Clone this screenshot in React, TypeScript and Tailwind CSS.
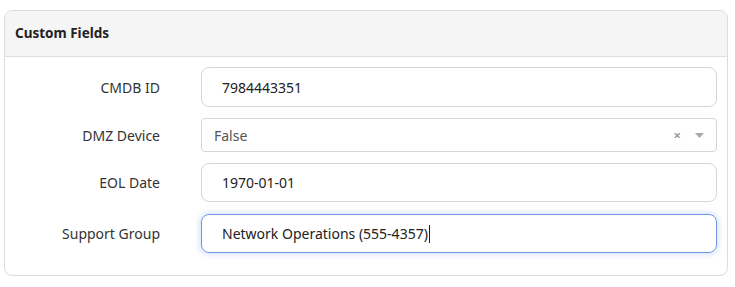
import React from 'react';

const font = { fontFamily: '"Noto Sans", "Open Sans", sans-serif' };

function Row({ label, children }: { label: string; children: React.ReactNode }) {
  return (
    <div className="flex items-center">
      <label className="w-[155px] shrink-0 text-right text-[14px] text-[#333]">{label}</label>
      <div className="ml-[41px] mr-[10px] flex-1">{children}</div>
    </div>
  );
}

export default function App() {
  return (
    <div className="h-[287px] w-[735px] bg-white pl-[4px] pr-[7px] pt-[10px]" style={font}>
      <div className="overflow-hidden rounded-[8px] border border-[#dcdcdc] bg-white">
        <div className="flex h-[46px] items-center border-b border-[#dedede] bg-[#f5f5f5] px-[10px]">
          <h3 className="text-[13.5px] font-bold text-[#222]">Custom Fields</h3>
        </div>
        <div className="flex flex-col gap-[11px] pb-[22px] pt-[10px]">
          <Row label="CMDB ID">
            <div className="flex h-[40px] items-center rounded-[8px] border border-[#d6d6d6] px-[20px] text-[14px] text-[#222]">
              7984443351
            </div>
          </Row>
          <Row label="DMZ Device">
            <div className="flex h-[34px] items-center rounded-[4px] border border-[#d6d6d6] pl-[12px] pr-[12px] text-[14px] text-[#555]">
              <span className="flex-1">False</span>
              <span className="mr-[14px] text-[13px] font-bold leading-none text-[#999]">×</span>
              <svg width="9" height="5" viewBox="0 0 9 5">
                <path d="M0 0h9L4.5 5z" fill="#aaa" />
              </svg>
            </div>
          </Row>
          <Row label="EOL Date">
            <div className="flex h-[39px] items-center rounded-[8px] border border-[#d6d6d6] px-[20px] text-[14px] text-[#222]">
              1970-01-01
            </div>
          </Row>
          <Row label="Support Group">
            <div className="mt-[1px] flex h-[39px] items-center rounded-[8px] border border-[#6f96e3] px-[20px] text-[14px] text-[#222] shadow-[0_0_5px_2px_rgba(111,150,227,0.25)]">
              Network Operations (555-4357)
              <span className="ml-[1px] inline-block h-[18px] w-px bg-[#222]" />
            </div>
          </Row>
        </div>
      </div>
    </div>
  );
}
